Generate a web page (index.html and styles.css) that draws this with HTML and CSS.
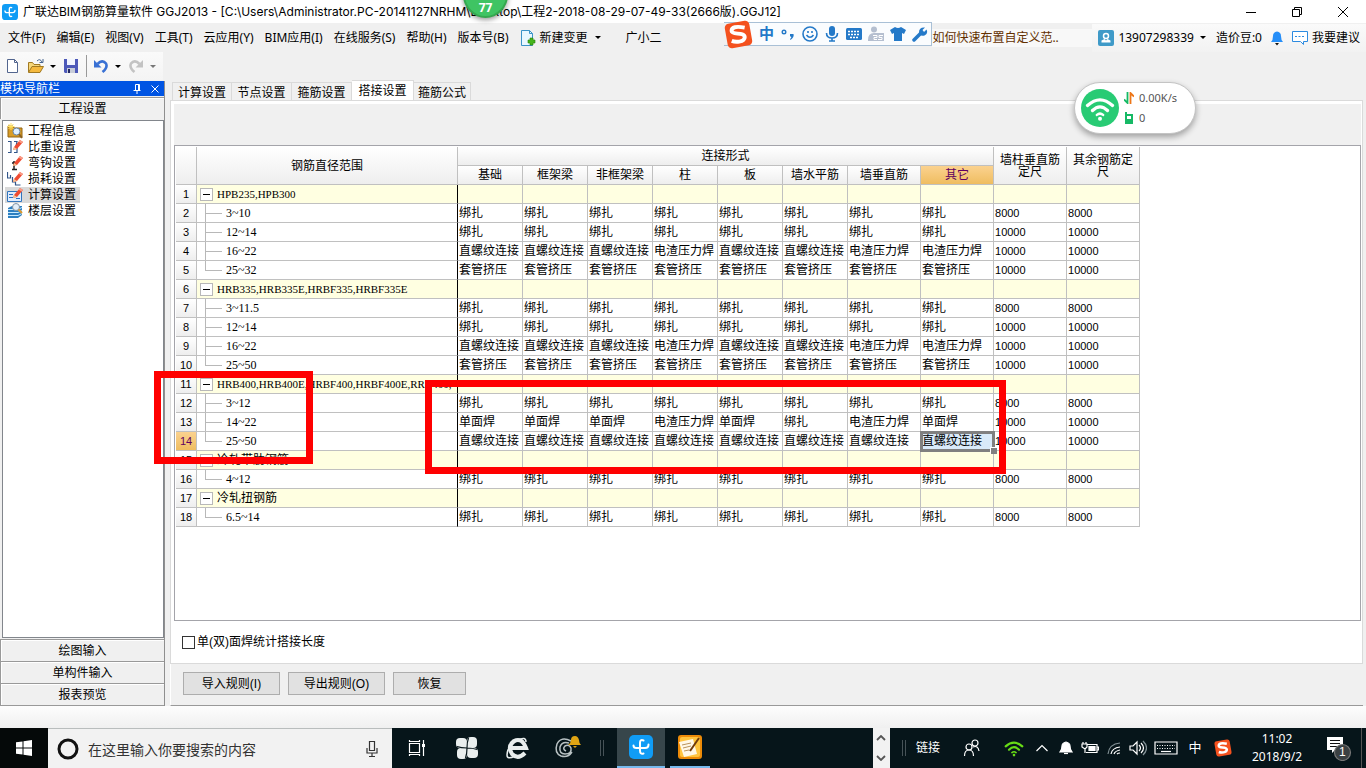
FILE: index.html
```html
<!DOCTYPE html>
<html lang="zh-CN">
<head>
<meta charset="utf-8">
<title>广联达BIM钢筋算量软件 GGJ2013</title>
<link rel="stylesheet" href="styles.css">
</head>
<body>
<svg class="defs" aria-hidden="true">
  <symbol id="swirl" viewBox="0 0 24 24"><rect width="24" height="24" rx="5" fill="#109cf5"/><path d="M14.500 5.500Q11 4 11 8v7.500q0 4 3.500 3M4.500 10.500Q4.500 13 7.500 13h8.500q3.500 0 3.500-3.500" fill="none" stroke="#fff" stroke-width="2" stroke-linecap="round"/></symbol>
  <symbol id="sogou" viewBox="0 0 28 28"><g transform="rotate(-10 14 14)"><rect x="2" y="2" width="24" height="24" rx="4" fill="#f4511e"/><path d="M21 8.500Q9 4 8 9.500C7.500 14 20 12 19.500 17.500C18.500 23 9 20.500 6.500 19" fill="none" stroke="#fff" stroke-width="3.800"/></g></symbol>
  <symbol id="pencil" viewBox="0 0 16 16"><path d="M6 11 7 8 13 1l3 2-6 7z" fill="#ef4b32"/><path d="M13 1l3 2-1.500 1.500-3-2z" fill="#f99c86"/><path d="M6 11l1-3 3 2z" fill="#f3c795"/></symbol>
  <symbol id="wifi" viewBox="0 0 24 24"><path d="M2 10q10-9 20 0M6 14q6-6 12 0" fill="none" stroke="currentColor" stroke-width="2.600" stroke-linecap="round"/><path d="M9.500 17.500q2.500-2 5 0" fill="none" stroke="currentColor" stroke-width="2" stroke-linecap="round"/><circle cx="12" cy="20.500" r="1.600" fill="currentColor"/></symbol>
</svg>

<div class="window">
  <header class="titlebar">
    <svg class="app-icon"><use href="#swirl"/></svg>
    <h1>广联达BIM钢筋算量软件 GGJ2013 - [C:\Users\Administrator.PC-20141127NRHM\Desktop\工程2-2018-08-29-07-49-33(2666版).GGJ12]</h1>
    <div class="win-controls">
      <button aria-label="最小化"><svg viewBox="0 0 12 12"><path d="M1 6.500h10" stroke="#000"/></svg></button>
      <button aria-label="还原"><svg viewBox="0 0 12 12"><path d="M1.500 3.500h7v7h-7zM3.500 3.500v-2h7v7h-2" fill="none" stroke="#000"/></svg></button>
      <button aria-label="关闭"><svg viewBox="0 0 12 12"><path d="M1 1l10 10M11 1 1 11" stroke="#000"/></svg></button>
    </div>
  </header>

  <nav class="menubar">
    <div class="menus">
      <button>文件(F)</button><button>编辑(E)</button><button>视图(V)</button><button>工具(T)</button><button>云应用(Y)</button><button>BIM应用(I)</button><button>在线服务(S)</button><button>帮助(H)</button><button>版本号(B)</button>
      <button class="change"><svg viewBox="0 0 16 16"><path d="M1.500.500h8l3 3v12h-11z" fill="#e8f7ff" stroke="#3b93c8"/><path d="M9.500.500v3h3" fill="none" stroke="#3b93c8"/><path d="M8 10h2V8h3v2h2v3h-2v2h-3v-2H8z" fill="#45b51c" stroke="#258106" stroke-width=".600"/></svg>新建变更<i class="caret"></i></button>
      <button class="gxe">广小二</button>
    </div>
    <a class="tip" href="#">如何快速布置自定义范..</a>
    <div class="account">
      <button class="user"><svg viewBox="0 0 16 16"><rect width="16" height="16" rx="2" fill="#3f9ac8"/><circle cx="8" cy="6" r="2.500" fill="none" stroke="#fff" stroke-width="1.500"/><path d="M3.500 12.500h9v-2L9.500 9 8 10.500 6.500 9l-3 1.500z" fill="#fff"/></svg><span class="phone">13907298339</span><i class="caret"></i></button>
      <span>造价豆:0</span>
      <button aria-label="通知"><svg class="bell" viewBox="0 0 14 16"><path d="M1 12q2-2 2-6 0-4 4-4.500Q11 2 11 6q0 4 2 6z" fill="#268ef8"/><path d="M5 13h4l-2 2.500z" fill="#111"/></svg></button>
      <button><svg viewBox="0 0 16 16"><path d="M.500 1.500h15v10h-4v3l-3-3h-8z" fill="#fff" stroke="#2d8be0"/><path d="M3 6.500h10" stroke="#2d8be0" stroke-dasharray="2 1.500"/></svg>我要建议</button>
    </div>
  </nav>

  <div class="toolbar">
    <button aria-label="新建"><svg viewBox="0 0 16 16"><path d="M2.500 1.500h7l3 3v10h-10z" fill="#fff" stroke="#52658e"/><path d="M9.500 1.500v3h3" fill="none" stroke="#52658e"/></svg></button>
    <button aria-label="打开" class="wide"><svg viewBox="0 0 16 16"><path d="M.500 14V4.500h4l1.500 2h6V9" fill="#f6d77a" stroke="#a17921"/><path d="M.500 14.500 4 8.500h11.500l-3.500 6z" fill="#f5b93e" stroke="#a17921"/><path d="M9 3q3-3 5 1M15 1v3.500h-3.500" fill="none" stroke="#46658f"/></svg><i class="caret"></i></button>
    <button aria-label="保存"><svg viewBox="0 0 16 16"><path d="M1 1h14v14H2l-1-1z" fill="#4d59b9"/><path d="M4 1h8v6H4z" fill="#f2f5ff"/><path d="M4 10h8v5H4z" fill="#c7ccd8"/><path d="M5 11h2v4H5z" fill="#242965"/></svg></button>
    <span class="sep"></span>
    <button aria-label="撤销" class="wide"><svg viewBox="0 0 16 16"><path d="M4.500 6q5-5 8.500-.500 2 4-3.500 8.500" fill="none" stroke="#3971d4" stroke-width="2.600"/><path d="M1 2v7.500h7.500z" fill="#3971d4"/></svg><i class="caret"></i></button>
    <button aria-label="重做" class="wide" disabled><svg viewBox="0 0 16 16"><path d="M11.500 6Q6.500 1 3 5.500q-2 4 3.500 8.500" fill="none" stroke="#c3c3c3" stroke-width="2.600"/><path d="M15 2v7.500H7.500z" fill="#c3c3c3"/></svg><i class="caret"></i></button>
  </div>

  <main class="workspace">
    <aside class="sidebar">
      <div class="side-title"><h2>模块导航栏</h2>
        <button aria-label="固定"><svg viewBox="0 0 10 10"><path d="M3.500 6V.500h4V6M1.500 6.500h7M5 7v3M6.500 1v5" fill="none" stroke="#fff"/></svg></button>
        <button aria-label="关闭导航"><svg viewBox="0 0 10 10"><path d="M1.500 1.500l7 7M8.500 1.500l-7 7" stroke="#fff"/></svg></button>
      </div>
      <button class="side-tab">工程设置</button>
      <ul class="side-list">
        <li><a href="#"><svg viewBox="0 0 16 16"><path d="M1 3h5l1 2h8v9H1z" fill="#d99d26" stroke="#936512"/><path d="M4 0v7M.500 3.500h7M1.500 1l5 5M6.500 1l-5 5" stroke="#ffe366"/><circle cx="9.500" cy="8.500" r="3.500" fill="#dff1ff" stroke="#6583a5"/><path d="M12 11l3 4" stroke="#8b6222" stroke-width="2"/></svg><span>工程信息</span></a></li>
        <li><a href="#"><svg viewBox="0 0 16 16"><path d="M1 2.500h3v11H1M7 2.500h3l-1 5 1 2v4H7" fill="none" stroke="#315589" stroke-width="1.200"/><use href="#pencil"/></svg><span>比重设置</span></a></li>
        <li><a href="#"><svg viewBox="0 0 16 16"><path d="M7 6v8M5 8h4M5 14.500h5" stroke="#222" stroke-width="1.500"/><use href="#pencil"/></svg><span>弯钩设置</span></a></li>
        <li><a href="#"><svg viewBox="0 0 16 16"><path d="M.500 1v6h3V4M5.500 6v5h3v3h5" fill="none" stroke="#315589" stroke-width="1.200"/><use href="#pencil"/></svg><span>损耗设置</span></a></li>
        <li class="current"><a href="#"><svg viewBox="0 0 16 16"><path d="M.500 4.500h14v10H.500z" fill="#dfedff" stroke="#3175bd"/><path d="M2 7.500h4M2 10.500h4M9 11.500h4" stroke="#2b72c5"/><use href="#pencil"/></svg><span>计算设置</span></a></li>
        <li><a href="#"><svg viewBox="0 0 16 16"><path d="M1 5l4-2h10v9l-4 3H1z" fill="#2d7fc1"/><path d="M1 6.500h10l4-2M1 9.500h10l4-2M1 12.500h10l4-2" fill="none" stroke="#c7eaff"/><circle cx="9" cy="4" r="3.500" fill="#e3eef8" stroke="#8193a4"/><path d="M11.500 6.500 15 10" stroke="#df9a2e" stroke-width="2"/></svg><span>楼层设置</span></a></li>
      </ul>
      <button class="side-tab">绘图输入</button>
      <button class="side-tab">单构件输入</button>
      <button class="side-tab">报表预览</button>
    </aside>

    <section class="content">
      <div class="tabs" role="tablist">
        <button role="tab">计算设置</button><button role="tab">节点设置</button><button role="tab">箍筋设置</button><button role="tab" aria-selected="true" class="active">搭接设置</button><button role="tab">箍筋公式</button>
      </div>
      <div class="panel">
        <div class="band"></div>
        <div class="sheet">
          <div class="canvas">
          <table>
            <colgroup><col class="c-num"><col class="c-name"><col class="c-s"><col class="c-s"><col class="c-s"><col class="c-s"><col class="c-s"><col class="c-s"><col class="c-l"><col class="c-l"><col class="c-l"><col class="c-l"></colgroup>
            <thead>
              <tr><th rowspan="2"></th><th rowspan="2">钢筋直径范围</th><th colspan="8">连接形式</th><th rowspan="2" class="two">墙柱垂直筋定尺</th><th rowspan="2" class="two">其余钢筋定尺</th></tr>
              <tr><th>基础</th><th>框架梁</th><th>非框架梁</th><th>柱</th><th>板</th><th>墙水平筋</th><th>墙垂直筋</th><th class="hot">其它</th></tr>
            </thead>
            <tbody>
              <tr class="group"><th>1</th><td><div class="node"><button aria-label="折叠"></button>HPB235,HPB300</div></td><td></td><td></td><td></td><td></td><td></td><td></td><td></td><td></td><td></td><td></td></tr>
              <tr><th>2</th><td class="leaf">3~10</td><td>绑扎</td><td>绑扎</td><td>绑扎</td><td>绑扎</td><td>绑扎</td><td>绑扎</td><td>绑扎</td><td>绑扎</td><td>8000</td><td>8000</td></tr>
              <tr><th>3</th><td class="leaf">12~14</td><td>绑扎</td><td>绑扎</td><td>绑扎</td><td>绑扎</td><td>绑扎</td><td>绑扎</td><td>绑扎</td><td>绑扎</td><td>10000</td><td>10000</td></tr>
              <tr><th>4</th><td class="leaf">16~22</td><td>直螺纹连接</td><td>直螺纹连接</td><td>直螺纹连接</td><td>电渣压力焊</td><td>直螺纹连接</td><td>直螺纹连接</td><td>电渣压力焊</td><td>电渣压力焊</td><td>10000</td><td>10000</td></tr>
              <tr><th>5</th><td class="leaf last">25~32</td><td>套管挤压</td><td>套管挤压</td><td>套管挤压</td><td>套管挤压</td><td>套管挤压</td><td>套管挤压</td><td>套管挤压</td><td>套管挤压</td><td>10000</td><td>10000</td></tr>
              <tr class="group"><th>6</th><td><div class="node"><button aria-label="折叠"></button>HRB335,HRB335E,HRBF335,HRBF335E</div></td><td></td><td></td><td></td><td></td><td></td><td></td><td></td><td></td><td></td><td></td></tr>
              <tr><th>7</th><td class="leaf">3~11.5</td><td>绑扎</td><td>绑扎</td><td>绑扎</td><td>绑扎</td><td>绑扎</td><td>绑扎</td><td>绑扎</td><td>绑扎</td><td>8000</td><td>8000</td></tr>
              <tr><th>8</th><td class="leaf">12~14</td><td>绑扎</td><td>绑扎</td><td>绑扎</td><td>绑扎</td><td>绑扎</td><td>绑扎</td><td>绑扎</td><td>绑扎</td><td>10000</td><td>10000</td></tr>
              <tr><th>9</th><td class="leaf">16~22</td><td>直螺纹连接</td><td>直螺纹连接</td><td>直螺纹连接</td><td>电渣压力焊</td><td>直螺纹连接</td><td>直螺纹连接</td><td>电渣压力焊</td><td>电渣压力焊</td><td>10000</td><td>10000</td></tr>
              <tr><th>10</th><td class="leaf last">25~50</td><td>套管挤压</td><td>套管挤压</td><td>套管挤压</td><td>套管挤压</td><td>套管挤压</td><td>套管挤压</td><td>套管挤压</td><td>套管挤压</td><td>10000</td><td>10000</td></tr>
              <tr class="group"><th>11</th><td><div class="node"><button aria-label="折叠"></button>HRB400,HRB400E,HRBF400,HRBF400E,RRB400,</div></td><td></td><td></td><td></td><td></td><td></td><td></td><td></td><td></td><td></td><td></td></tr>
              <tr><th>12</th><td class="leaf">3~12</td><td>绑扎</td><td>绑扎</td><td>绑扎</td><td>绑扎</td><td>绑扎</td><td>绑扎</td><td>绑扎</td><td>绑扎</td><td>8000</td><td>8000</td></tr>
              <tr><th>13</th><td class="leaf">14~22</td><td>单面焊</td><td>单面焊</td><td>单面焊</td><td>电渣压力焊</td><td>单面焊</td><td>绑扎</td><td>电渣压力焊</td><td>单面焊</td><td>10000</td><td>10000</td></tr>
              <tr><th class="hot">14</th><td class="leaf last">25~50</td><td>直螺纹连接</td><td>直螺纹连接</td><td>直螺纹连接</td><td>直螺纹连接</td><td>直螺纹连接</td><td>直螺纹连接</td><td>直螺纹连接</td><td class="selected">直螺纹连接</td><td>10000</td><td>10000</td></tr>
              <tr class="group cjk"><th>15</th><td><div class="node"><button aria-label="折叠"></button>冷轧带肋钢筋</div></td><td></td><td></td><td></td><td></td><td></td><td></td><td></td><td></td><td></td><td></td></tr>
              <tr><th>16</th><td class="leaf last">4~12</td><td>绑扎</td><td>绑扎</td><td>绑扎</td><td>绑扎</td><td>绑扎</td><td>绑扎</td><td>绑扎</td><td>绑扎</td><td>8000</td><td>8000</td></tr>
              <tr class="group cjk"><th>17</th><td><div class="node"><button aria-label="折叠"></button>冷轧扭钢筋</div></td><td></td><td></td><td></td><td></td><td></td><td></td><td></td><td></td><td></td><td></td></tr>
              <tr><th>18</th><td class="leaf last">6.5~14</td><td>绑扎</td><td>绑扎</td><td>绑扎</td><td>绑扎</td><td>绑扎</td><td>绑扎</td><td>绑扎</td><td>绑扎</td><td>8000</td><td>8000</td></tr>
            </tbody>
          </table>
          <div class="mark mark-rows"></div>
          <div class="mark mark-cells"></div>
          </div>
        </div>
        <label class="option"><input type="checkbox">单(双)面焊统计搭接长度</label>
      </div>
      <div class="actions"><button>导入规则(I)</button><button>导出规则(O)</button><button class="short">恢复</button></div>
    </section>
  </main>
  <div class="statusbar"></div>

  <footer class="taskbar">
    <button class="start" aria-label="开始"><svg viewBox="0 0 16 16"><path d="M0 2.300 6.500 1.400v6.100H0zM7.500 1.200 16 0v7.500H7.500zM0 8.500h6.500v6.100L0 13.700zM7.500 8.500H16V16l-8.500-1.200z" fill="#fff"/></svg></button>
    <div class="search"><svg class="ring" viewBox="0 0 22 22"><circle cx="11" cy="11" r="9" fill="none" stroke="#111" stroke-width="3"/></svg><input type="text" aria-label="搜索" placeholder="在这里输入你要搜索的内容"><svg class="mic" viewBox="0 0 12 18"><path d="M3.500 1.500h5v9h-5zM1 8v5h10V8M6 13v3.500M3 16.500h6" fill="none" stroke="#333" stroke-width="1.200"/></svg></div>
    <div class="apps">
      <button aria-label="任务视图"><svg class="s18" viewBox="0 0 18 18"><path d="M1.500 4.500h10v9h-10zM1.500 1v2M11.500 1v2M1.500 2.500h10M1.500 15v2M11.500 15v2M1.500 15.500h10M15.500 1v16" fill="none" stroke="#fff" stroke-width="1.200"/><path d="M14 5h3v3h-3z" fill="#fff"/></svg></button>
      <button aria-label="应用"><svg class="s24" viewBox="0 0 24 24"><g fill="#e9eeee"><rect x="1" y="2" width="11" height="10" rx="4"/><rect x="12" y="1" width="10" height="11" rx="4"/><rect x="12" y="12" width="11" height="10" rx="4"/><rect x="2" y="12" width="10" height="11" rx="4"/><circle cx="12" cy="12" r="4"/></g><path d="M12 12Q6 12 2 10.500M12 12q0-6 1.500-10M12 12q6 0 10 1.500M12 12q0 6-1.500 10" fill="none" stroke="#06151a" stroke-width="1.200"/></svg></button>
      <button aria-label="浏览器"><svg class="s24" viewBox="0 0 24 24"><path d="M20 17q-7 7-13 1-5-8 2-13 8-4 12 7H7" fill="none" stroke="#e9eeee" stroke-width="4"/><path d="M21 6q0-6-8-2Q2 10 2 19q0 5 8 1" fill="none" stroke="#e9eeee" stroke-width="1.500"/></svg></button>
      <button aria-label="提醒"><svg class="s28" viewBox="0 0 28 28"><path d="M18 7Q8 2 4 10q-3 9 4 12 7 2 11-4M16 9q-7-2-9 4-1 7 5 7 7 0 6-6-2-4-6-2-3 3 1 5" fill="none" stroke="#b9c2c4" stroke-width="1.500"/><path d="M15 11q3-2 3-5 0-4 4-4 3 0 4 4 0 3 2 5zM20 12h4l-2 2z" fill="#dfa414"/></svg></button>
      <span class="grip"></span>
      <button class="running current-app" aria-label="广联达"><svg class="s24"><use href="#swirl"/></svg></button>
      <button class="running" aria-label="编辑工具"><svg class="s24" viewBox="0 0 24 24"><rect width="24" height="24" rx="3" fill="#ed8b08"/><rect x="2" y="2" width="20" height="20" rx="2" fill="#ffc43e"/><path d="M1 7l14-3 4 15-13 3z" fill="#fff8e7"/><path d="M4 10l9-2M5 13l8-2M6 16l5-1" stroke="#b9935c"/><path d="M21 3 12 16" stroke="#713b0b" stroke-width="2"/></svg></button>
    </div>
    <div class="updown"><button aria-label="向上"><svg viewBox="0 0 10 6"><path d="M1 5l4-4 4 4" fill="none" stroke="#555" stroke-width="1.800"/></svg></button><button aria-label="向下"><svg viewBox="0 0 10 6"><path d="M1 1l4 4 4-4" fill="none" stroke="#555" stroke-width="1.800"/></svg></button></div>
    <div class="tray">
      <span class="grip"></span>
      <a class="links" href="#">链接</a>
      <button class="people" aria-label="人脉"><svg class="s18" viewBox="0 0 18 18"><circle cx="6" cy="8" r="3"/><path d="M1.500 17q0-6 4.500-6t4.500 6"/><circle cx="12" cy="4" r="3"/><path d="M10 8q5-2 6 4"/></svg></button>
      <button class="green" aria-label="免费WiFi"><svg class="s20"><use href="#wifi"/></svg></button>
      <button aria-label="显示隐藏的图标"><svg class="s14" viewBox="0 0 14 14"><path d="M1.500 10 7 4.500l5.500 5.500"/></svg></button>
      <button aria-label="通知"><svg class="s14" viewBox="0 0 14 14"><path d="M1 11q2-2 2-6 0-3 4-4 4 1 4 4 0 4 2 6z" fill="#fff"/><path d="M5 12.500h4"/></svg></button>
      <button aria-label="电源"><svg class="s18" viewBox="0 0 18 18"><path d="M6 5.500h10v8H5M16 8h1.500v3H16M1 5h5v3L4 10 1 8zM2 3v2M5 3v2M4 10v4"/><path d="M8 7.500h6v4H8z" fill="#fff"/></svg></button>
      <button aria-label="网络"><svg class="s14" viewBox="0 0 14 14"><path d="M4 13q1-6 9-7M7 13q1-3 6-4M10 13q1-1 3-1"/><path d="M1 13Q2 3 13 2" stroke="#829095"/></svg></button>
      <button aria-label="音量"><svg class="s18" viewBox="0 0 18 18"><path d="M1 7h3l4-4v12l-4-4H1zM10 6q3 3 0 6M12 4q5 5 0 10"/><path d="M14 2q7 7 0 14" stroke="#829095"/></svg></button>
      <button class="keys" aria-label="触摸键盘"><svg viewBox="0 0 24 14"><path d="M1 1h22v12H1z"/><path d="M3 4.500h18M3 7.500h18" stroke-dasharray="1 1.500"/><path d="M7 10.500h10"/></svg></button>
      <button class="ime">中</button>
      <button class="sg" aria-label="搜狗输入法"><svg class="s18"><use href="#sogou"/></svg></button>
      <div class="clock"><time>11:02</time><span>2018/9/2</span></div>
      <button class="center" aria-label="操作中心"><svg viewBox="0 0 26 26"><path d="M1 2h16v13H9l-3 3v-3H1z" fill="#fff" stroke="none"/><path d="M4 5.500h10M4 8.500h10M4 11.500h7" stroke="#111"/><circle cx="16.500" cy="17.500" r="8" fill="#3b4143" stroke="#777"/></svg><b>1</b></button>
    </div>
  </footer>
</div>

<div class="score">77</div>
<div class="ime-bar">
  <svg class="ime-logo"><use href="#sogou"/></svg>
  <span>中</span>
  <svg viewBox="0 0 16 16"><circle cx="4" cy="6" r="1.800" fill="none" stroke="#2479c8" stroke-width="1.400"/><path d="M10 8h3.500q1 3-3 6l-.500-1q2-1.500 1-2.500h-1z" fill="#2479c8"/></svg>
  <svg viewBox="0 0 16 16"><g fill="none" stroke="#2479c8" stroke-width="1.600"><circle cx="8" cy="8" r="7"/><path d="M4.500 9q3.500 4.500 7 0"/><path d="M6 5v2M10 5v2"/></g></svg>
  <svg viewBox="0 0 16 16"><rect x="5" y="0" width="6" height="10" rx="3" fill="#2479c8"/><path d="M2.500 7q0 5 5.500 5t5.500-5M8 12v3M5 15h6" fill="none" stroke="#2479c8" stroke-width="1.600"/></svg>
  <svg viewBox="0 0 16 16"><rect x="0" y="2" width="16" height="12" rx="1.500" fill="#2479c8"/><path d="M2 5.500h12M2 8.500h12M4 11.500h8" stroke="#fff" stroke-width="1.300" stroke-dasharray="2 1"/></svg>
  <svg viewBox="0 0 16 16"><circle cx="6" cy="3.500" r="3" fill="#b5bfd0"/><path d="M0 14q0-7 6-7h10v8H0z" fill="#b5bfd0"/><path d="M5 9.500h4v2H6v2h3M15 9.500h-4v2h3v2h-4" fill="none" stroke="#fff"/></svg>
  <svg viewBox="0 0 16 16"><path d="M5 1q3 2 6 0l5 3-2 4-2-1v8H4V7L2 8 0 4z" fill="#2479c8"/></svg>
  <svg viewBox="0 0 16 16"><path d="M2 14 9.500 6.500" stroke="#2479c8" stroke-width="3.500" stroke-linecap="round"/><path d="M13 1.500 10.500 4l1.500 2 2.500-2.500q2 4-2 6-5 1-5.500-3Q7 1 13 1.500z" fill="#2479c8"/></svg>
</div>
<div class="net">
  <span class="net-disc"><svg><use href="#wifi"/></svg></span>
  <div class="net-text">
    <span><svg viewBox="0 0 10 12"><path d="M3.500 0v11L0 7.500" fill="none" stroke="#16b965" stroke-width="1.800"/><path d="M6.500 12V1L10 4.500" fill="none" stroke="#ed7618" stroke-width="1.800"/></svg>0.00K/s</span>
    <span><svg viewBox="0 0 10 12"><path d="M1 0h2v2h6v10H1z" fill="#16b965"/><path d="M3 4h4v3H3z" fill="#fff"/></svg>0</span>
  </div>
</div>
</body>
</html>
```
FILE: styles.css
```css
* { box-sizing: border-box; }
body { margin: 0; color: #000; font: 12px/18px "Liberation Sans", "Noto Sans CJK SC", sans-serif; }
button { margin: 0; padding: 0; border: 0; background: none; color: inherit; font: inherit; }
a { color: inherit; text-decoration: none; }
h1, h2 { margin: 0; font: inherit; }
svg { display: block; flex: none; }
.defs { position: absolute; width: 0; height: 0; }
.window { display: flex; flex-direction: column; min-height: 100vh; background: #f0f0f0; }
.caret { width: 0; height: 0; border: 3px solid transparent; border-top-color: #000; border-bottom: 0; }

.titlebar { display: flex; align-items: center; height: 23px; padding-left: 2px; background: #fff; font-family: Inter, "Noto Sans CJK SC", sans-serif; }
.app-icon { width: 16px; height: 16px; margin-right: 5px; }
.titlebar h1 { flex: 1; white-space: nowrap; }
.win-controls { display: flex; }
.win-controls button { display: grid; place-items: center; width: 46px; height: 22px; }
.win-controls svg { width: 12px; height: 12px; }

.menubar { display: flex; align-items: center; height: 29px; font-family: "Noto Sans", "Noto Sans CJK SC", sans-serif; }
.menus { display: flex; flex: 1; gap: 11px; padding-left: 8px; white-space: nowrap; }
.menubar button { display: flex; align-items: center; }
.menubar svg { width: 16px; height: 16px; margin-right: 4px; }
.change .caret { margin-left: 7px; }
.menus .gxe { margin-left: 14px; }
.tip { width: 160px; color: #633000; background: #f8f8f8; }
.account { display: flex; align-items: center; gap: 8px; height: 28px; padding: 0 6px; background: linear-gradient(#fafafa, #f2f2f2); white-space: nowrap; }
.phone { margin-right: 6px; }
.account .user { margin-right: 2px; }
.account .bell { width: 14px; margin-right: 0; }

.toolbar { display: flex; align-items: center; align-self: flex-start; height: 28px; margin-bottom: 1px; padding-left: 5px; background: linear-gradient(#fafafa, #f4f4f4); }
.toolbar button { width: 23px; }
.toolbar .wide { display: flex; align-items: center; gap: 6px; width: 35px; }
.toolbar svg { width: 16px; height: 16px; }
.toolbar .sep { width: 1px; height: 22px; margin: 0 6px 0 0; background: #999; }
.toolbar :disabled .caret { border-top-color: #777; }

.workspace { display: flex; flex: 1; }
.sidebar { display: flex; flex-direction: column; width: 165px; background: #f0f0f0; border-right: 1px solid #8f8f8f; }
.side-title { display: flex; align-items: center; height: 15px; margin-bottom: 1px; color: #fff; background: #0054e3; line-height: 15px; }
.side-title h2 { flex: 1; padding-top: 1px; }
.side-title button { width: 18px; }
.side-title svg { width: 10px; height: 10px; margin: auto; }
.side-tab { height: 22px; border: 1px solid #999; border-width: 1px 0 0 1px; box-shadow: inset 1px 1px #fff; }
.side-tab:last-child { height: 23px; border-bottom-width: 1px; }
.side-list { flex: 1; margin: 1px 0 1px 2px; padding: 2px; list-style: none; background: #fff; border: 1px solid #82868c; }
.side-list li { width: 75px; height: 16px; padding-left: 2px; }
.side-list a { display: flex; gap: 5px; line-height: 16px; }
.side-list svg { width: 16px; height: 16px; }
.side-list .current { background: #d9d9d9; }

.content { display: flex; flex: 1; flex-direction: column; min-width: 0; padding: 0 3px 0 5px; }
.tabs { display: flex; align-items: flex-end; height: 19px; padding-left: 2px; }
.tabs button { width: 60px; height: 18px; padding-top: 1px; border: 1px solid #dadada; border-width: 1px 1px 0 0; }
.tabs button:first-child { border-left-width: 1px; }
.tabs .active { width: 62px; height: 20px; background: #fff; }
.tabs button:last-child { width: 57px; }
.panel { display: flex; flex: 1; flex-direction: column; padding: 3px 1px 0 3px; background: #fff; border: 1px solid #dadada; }
.band { height: 41px; background: #f0f0f0; }
.sheet { flex: 1; padding: 1px; border: 1px solid #a4a4aa; }
.canvas { position: relative; width: max-content; }
table { width: 964px; table-layout: fixed; border-spacing: 0; border-collapse: separate; }
.c-num { width: 21px; }
.c-name { width: 261px; }
.c-s { width: 65px; }
.c-l { width: 73px; }
th, td { height: 19px; padding: 0 0 0 1px; border: 1px solid #c0c0c0; border-width: 0 1px 1px 0; line-height: 18px; white-space: nowrap; }
th { padding: 0; font-weight: normal; background: linear-gradient(#fff, #eee); }
.two { padding: 0 2px; line-height: 12px; white-space: normal; }
th.hot { color: #600060; background: linear-gradient(#fbd28f, #efbd60); }
tbody th, td:nth-child(n+11) { font-size: 11px; }
td:nth-child(2) { border-right-color: #000; font-family: "Liberation Serif", "Noto Sans CJK SC", serif; }
.group td { background: #ffffe1; }
.node { display: flex; align-items: center; gap: 4px; height: 18px; padding-left: 2px; font-size: 11px; }
.cjk .node { font-size: 12px; }
.node button { flex: none; width: 13px; height: 13px; background: linear-gradient(#000, #000) center / 7px 1px no-repeat #fff; border: 1px solid #b8b8b8; }
td.leaf { padding-left: 29px; background: linear-gradient(#b8b8b8, #b8b8b8) 8px 0 / 1px 100% no-repeat, linear-gradient(#b8b8b8, #b8b8b8) 8px 9px / 17px 1px no-repeat; }
td.last { background-size: 1px 10px, 17px 1px; }
.selected { position: relative; background: #d9eaf9; outline: 3px solid #808080; outline-offset: -2px; }
.selected::after { content: ""; position: absolute; right: -4px; bottom: -4px; width: 6px; height: 6px; background: #808080; border: 1px solid #fff; border-width: 1px 0 0 1px; }
.mark { position: absolute; border: 7px solid #f00; pointer-events: none; }
.mark-rows { left: -22px; top: 224px; width: 159px; height: 93px; }
.mark-cells { left: 249px; top: 233px; width: 581px; height: 94px; }
.option { display: flex; align-items: center; gap: 2px; height: 42px; padding-left: 8px; }
.option input { appearance: none; width: 13px; height: 13px; margin: 0; background: #fff; border: 1px solid #333; }
.actions { display: flex; gap: 8px; height: 42px; padding: 7px 12px; border-bottom: 1px solid #999; border-left: 1px solid #fff; }
.actions button { width: 97px; height: 23px; margin-top: 1px; background: #e1e1e1; border: 1px solid #adadad; }
.actions .short { width: 73px; }
.statusbar { height: 22px; background: linear-gradient(#fdfdfd, #f0f0f0); }

.taskbar { display: flex; height: 40px; color: #fff; background: #06151a; }
.taskbar button { display: grid; flex: none; place-items: center; }
.s14 { width: 14px; height: 14px; }
.s18 { width: 18px; height: 18px; }
.s20 { width: 20px; height: 20px; }
.s24 { width: 24px; height: 24px; }
.s28 { width: 28px; height: 28px; }
.start { width: 48px; background: #050909; }
.start svg { width: 16px; height: 16px; }
.search { display: flex; align-items: center; width: 344px; padding: 0 14px 0 9px; background: #f2f2f2; border-top: 1px solid #b9bdbd; }
.ring { width: 22px; height: 22px; }
.search input { flex: 1; min-width: 0; padding: 0 0 0 9px; border: 0; outline: 0; background: none; font: 14px/20px "Noto Sans CJK SC", sans-serif; }
.search input::placeholder { color: #333; opacity: 1; }
.mic { width: 12px; height: 18px; }
.apps { display: flex; flex: 1; }
.apps button { width: 50px; }
.apps .grip { margin: auto 13px auto 8px; }
.apps .running { width: 48px; border-bottom: 2px solid #76b9ed; }
.apps .running:last-child { width: 40px; margin-left: 5px; }
.apps .current-app { background: #37464b; }
.grip { width: 4px; height: 16px; border: 1px solid #465257; border-width: 0 1px; }
.updown { display: flex; flex-direction: column; width: 17px; background: #f2f2f2; }
.updown button { flex: 1; }
.updown svg { width: 10px; height: 6px; }
.tray { display: flex; align-items: center; padding-left: 12px; }
.tray button { position: relative; width: 24px; height: 40px; }
.tray svg { fill: none; stroke: #fff; stroke-width: 1.2; }
.tray svg use { stroke: none; }
.links { padding: 0 20px 0 10px; }
.tray .people { margin: 0 14px 0 0; }
.tray .green { width: 32px; color: #68dc16; }
.tray .keys { width: 32px; }
.keys svg { width: 24px; height: 14px; }
.tray .ime { width: 26px; font-size: 13px; }
.tray .sg { width: 30px; }
.clock { display: flex; flex-direction: column; width: 78px; text-align: center; font-family: "Noto Sans", sans-serif; }
.tray .center { width: 46px; margin-right: 4px; border-right: 1px solid #555; }
.center svg { width: 26px; height: 26px; }
.center b { position: absolute; left: 23px; top: 15px; font-weight: normal; }

.score { position: absolute; left: 463px; top: -28px; width: 45px; height: 46px; padding-top: 25px; border: 2px solid #35a84f; border-radius: 50%; color: #fff; background: #3fc463; box-shadow: 0 2px 5px #0006; font: bold 12px/18px "Noto Sans", sans-serif; text-align: center; }
.ime-bar { position: absolute; left: 724px; top: 22px; display: flex; align-items: center; gap: 6px; height: 24px; padding-right: 3px; background: linear-gradient(to right, transparent 10px, #fafcfe 10px); border: 1px solid #a9c0d6; border-left: 0; color: #2479c8; }
.ime-bar svg { width: 16px; height: 16px; }
.ime-bar .ime-logo { width: 29px; height: 29px; }
.ime-bar span { font-size: 15px; font-weight: bold; }
.net { position: absolute; left: 1074px; top: 82px; display: flex; align-items: center; gap: 5px; width: 122px; height: 52px; padding-left: 6px; background: #fff; border: 1px solid #c4c4c4; border-radius: 26px; box-shadow: 0 3px 6px #0005; color: #555; }
.net-disc { display: grid; place-items: center; width: 38px; height: 38px; border-radius: 50%; color: #fff; background: #28cb74; }
.net-disc svg { width: 30px; height: 30px; }
.net-text { display: flex; flex-direction: column; gap: 2px; font: 11px/18px "Noto Sans", sans-serif; }
.net-text span { display: flex; align-items: center; gap: 5px; }
.net-text svg { width: 10px; height: 12px; }
```
